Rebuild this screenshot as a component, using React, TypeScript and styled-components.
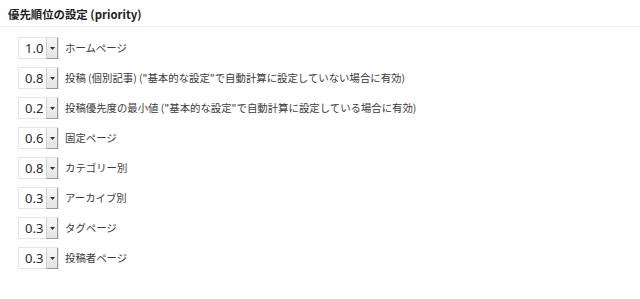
import React from 'react';
import styled, { createGlobalStyle } from 'styled-components';

const GlobalStyle = createGlobalStyle`
  html, body {
    margin: 0;
    padding: 0;
    background: #fff;
  }
  body {
    font-family: "Noto Sans CJK JP", "Noto Sans", sans-serif;
    color: #333;
  }
`;

const Panel = styled.section({
  width: '640px',
  height: '299px',
  background: '#fff',
});

const Heading = styled.h3({
  margin: 0,
  height: '27px',
  boxSizing: 'border-box',
  padding: '5px 0 0 8px',
  fontSize: '11.4px',
  fontWeight: 700,
  lineHeight: '18px',
  color: '#222',
  borderBottom: '1px solid #efefef',
});

const List = styled.ul({
  listStyle: 'none',
  margin: 0,
  padding: '10px 0 0 18px',
  display: 'flex',
  flexDirection: 'column',
  gap: '8px',
});

const Row = styled.li({
  display: 'flex',
  alignItems: 'center',
  gap: '6px',
  height: '22px',
});

const SelectBox = styled.div({
  display: 'flex',
  alignItems: 'stretch',
  width: '41px',
  height: '22px',
  boxSizing: 'border-box',
  border: '1px solid #e4e4e4',
  background: '#fff',
});

const Value = styled.span({
  flex: 1,
  display: 'flex',
  alignItems: 'center',
  paddingLeft: '6px',
  fontFamily: '"Noto Sans", sans-serif',
  fontSize: '13px',
  color: '#2a2a2a',
});

const Arrow = styled.span({
  width: '10px',
  display: 'flex',
  alignItems: 'center',
  justifyContent: 'center',
  background: 'linear-gradient(#f6f6f6, #e4e4e4)',
  borderLeft: '1px solid #d0d0d0',
  borderRight: '1px solid #9a9a9a',
  borderBottom: '1px solid #9a9a9a',
  marginBottom: '-1px',
});

const Label = styled.span({
  fontSize: '10.4px',
  lineHeight: '16px',
  color: '#3a3a3a',
  whiteSpace: 'nowrap',
});

const items = [
  { value: '1.0', label: 'ホームページ' },
  { value: '0.8', label: '投稿 (個別記事) ("基本的な設定"で自動計算に設定していない場合に有効)' },
  { value: '0.2', label: '投稿優先度の最小値 ("基本的な設定"で自動計算に設定している場合に有効)' },
  { value: '0.6', label: '固定ページ' },
  { value: '0.8', label: 'カテゴリー別' },
  { value: '0.3', label: 'アーカイブ別' },
  { value: '0.3', label: 'タグページ' },
  { value: '0.3', label: '投稿者ページ' },
];

const PrioritySelect = ({ value }: { value: string }) => (
  <SelectBox>
    <Value>{value}</Value>
    <Arrow>
      <svg width="5" height="3" viewBox="0 0 5 3">
        <path d="M0 0h5L2.5 3z" fill="#333" />
      </svg>
    </Arrow>
  </SelectBox>
);

const App = () => (
  <>
    <GlobalStyle />
    <Panel>
      <Heading>優先順位の設定 (priority)</Heading>
      <List>
        {items.map((item, i) => (
          <Row key={i}>
            <PrioritySelect value={item.value} />
            <Label>{item.label}</Label>
          </Row>
        ))}
      </List>
    </Panel>
  </>
);

export default App;
